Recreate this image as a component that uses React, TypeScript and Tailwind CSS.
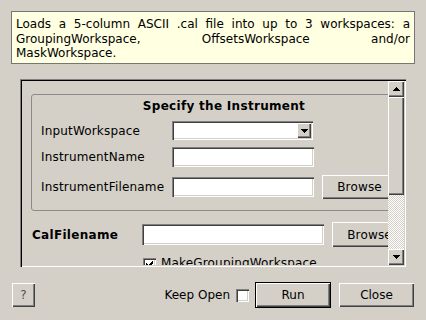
import React from 'react';

// classic Windows-ish bevels
const raised = 'shadow-[inset_1px_1px_0_#ffffff,inset_-1px_-1px_0_#404040,inset_-2px_-2px_0_#808080]';
const sunken = 'shadow-[inset_1px_1px_0_#808080,inset_2px_2px_0_#404040,inset_-1px_-1px_0_#ffffff,inset_-2px_-2px_0_#d4d0c8]';

const Arrow: React.FC<{ dir: 'up' | 'down' }> = ({ dir }) => {
  const rows = dir === 'down' ? [7, 5, 3, 1] : [1, 3, 5, 7];
  return (
    <svg width="7" height="4" viewBox="0 0 7 4" shapeRendering="crispEdges" className="block">
      {rows.map((w, i) => (
        <rect key={i} x={(7 - w) / 2} y={i} width={w} height={1} fill="#000" />
      ))}
    </svg>
  );
};

const Button: React.FC<{ label: string; className?: string }> = ({ label, className = '' }) => (
  <div className={`flex items-center justify-center bg-[#d4d0c8] ${raised} ${className}`}>{label}</div>
);

const LineEdit: React.FC<{ className?: string }> = ({ className = '' }) => (
  <div className={`bg-white ${sunken} ${className}`} />
);

const CheckBox: React.FC<{ checked?: boolean; className?: string }> = ({ checked, className = '' }) => (
  <div className={`w-[13px] h-[13px] shrink-0 bg-white flex items-center justify-center ${sunken} ${className}`}>
    {checked && (
      <svg width="7" height="7" viewBox="0 0 7 7" shapeRendering="crispEdges">
        <path d="M0 2h1v1h1v1h1v-1h1v-1h1v-1h1v-1h1v3h-1v1h-1v1h-1v1h-1v1h-1v-1h-1v-1h-1z" fill="#000" />
      </svg>
    )}
  </div>
);

export default function App() {
  return (
    <div className="w-[426px] h-[320px] overflow-hidden bg-[#d4d0c8] text-[12px] leading-[14px] text-black font-['DejaVu_Sans',sans-serif] flex flex-col">
      {/* description */}
      <div className="mx-[11px] mt-[11px] h-[53px] border border-[#767676] bg-[#ffffe1] px-[4px] pt-[5px] leading-[14.5px]">
        <div className="text-justify [text-align-last:justify] whitespace-nowrap">Loads a 5-column ASCII .cal file into up to 3 workspaces: a</div>
        <div className="text-justify [text-align-last:justify] whitespace-nowrap">GroupingWorkspace, OffsetsWorkspace and/or</div>
        <div>MaskWorkspace.</div>
      </div>

      {/* scroll area */}
      <div className="mx-[20px] mt-[15px] w-[386px] h-[188px] p-[2px] flex shadow-[inset_1px_1px_0_#808080,inset_2px_2px_0_#000000,inset_-1px_-1px_0_#ffffff,inset_-2px_-2px_0_#d4d0c8]">
        <div className="flex-1 overflow-hidden tracking-[0.17px]">
          <div className="w-[440px] pl-[9px] pt-[13px]">
            <div className="w-[386px] h-[117px] border border-[#8e8b86] rounded-[3px] pl-[9px] pt-[4px]">
              <div className="font-bold tracking-[0.3px] text-center pr-[9px]">Specify the Instrument</div>
              <div className="mt-[8px] h-[19px] flex items-center">
                <div className="w-[131px]">InputWorkspace</div>
                <div className={`w-[141px] h-[19px] bg-white p-[2px] flex justify-end ${sunken}`}>
                  <div className={`w-[14px] h-[15px] bg-[#d4d0c8] flex items-center justify-center ${raised}`}>
                    <Arrow dir="down" />
                  </div>
                </div>
              </div>
              <div className="mt-[7px] h-[20px] flex items-center">
                <div className="w-[131px]">InstrumentName</div>
                <LineEdit className="w-[142px] h-[20px]" />
              </div>
              <div className="mt-[8px] h-[24px] flex items-center">
                <div className="w-[131px]">InstrumentFilename</div>
                <LineEdit className="w-[142px] h-[20px]" />
                <Button label="Browse" className="ml-[8px] w-[75px] h-[24px] shrink-0" />
              </div>
            </div>

            <div className="mt-[11px] ml-[1px] h-[25px] flex items-center">
              <div className="w-[110px] font-bold tracking-[0.3px]">CalFilename</div>
              <LineEdit className="w-[182px] h-[21px]" />
              <Button label="Browse" className="ml-[8px] w-[75px] h-[25px] shrink-0" />
            </div>

            <div className="mt-[9px] ml-[112px] flex items-start">
              <CheckBox checked className="mt-[2px]" />
              <div className="ml-[5px]">MakeGroupingWorkspace</div>
            </div>
          </div>
        </div>

        {/* vertical scrollbar */}
        <div className="w-[16px] flex flex-col">
          <div className={`h-[16px] bg-[#d4d0c8] flex items-center justify-center ${raised}`}>
            <Arrow dir="up" />
          </div>
          <div className={`h-[98px] bg-[#d4d0c8] ${raised}`} />
          <div className="h-[54px] bg-[repeating-conic-gradient(#d4d0c8_0%_25%,#ffffff_0%_50%)] bg-[length:2px_2px]" />
          <div className={`h-[16px] bg-[#d4d0c8] flex items-center justify-center ${raised}`}>
            <Arrow dir="down" />
          </div>
        </div>
      </div>

      {/* bottom buttons */}
      <div className="mt-[15px] h-[26px] px-[12px] flex items-center">
        <Button label="?" className="w-[23px] h-[24px] text-[#505050]" />
        <div className="ml-auto">Keep Open</div>
        <CheckBox className="ml-[6px]" />
        <div className="ml-[6px] w-[76px] h-[26px] border border-black">
          <Button label="Run" className="w-full h-full" />
        </div>
        <Button label="Close" className="ml-[8px] w-[75px] h-[24px]" />
      </div>
    </div>
  );
}
